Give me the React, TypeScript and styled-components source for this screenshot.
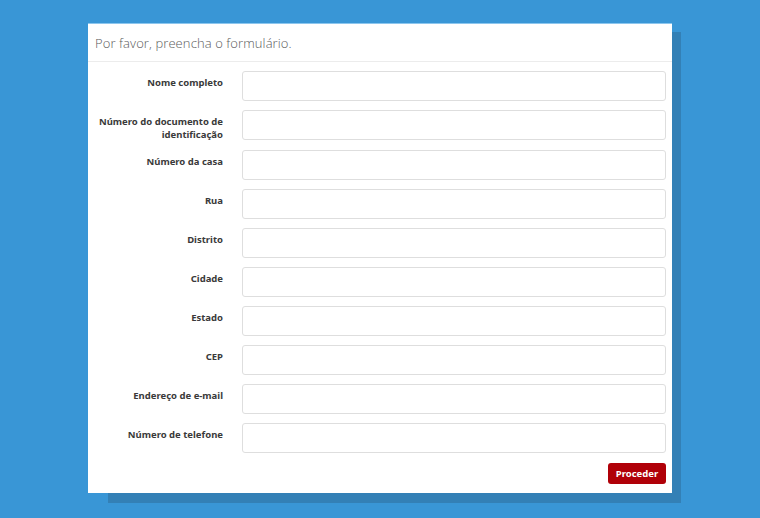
import React, { FC } from 'react'
import styled, { createGlobalStyle } from 'styled-components'

const GlobalStyle = createGlobalStyle`
  html, body {
    margin: 0;
    padding: 0;
    background: #3996d6;
    font-family: 'Noto Sans', 'DejaVu Sans', sans-serif;
  }
`

const fields = [
  'Nome completo',
  'Número do documento de identificação',
  'Número da casa',
  'Rua',
  'Distrito',
  'Cidade',
  'Estado',
  'CEP',
  'Endereço de e-mail',
  'Número de telefone',
]

const App: FC = () => (
  <>
    <GlobalStyle />
    <Page>
      <Frame>
        <Card>
          <Header>Por favor, preencha o formulário.</Header>
          <Body>
            {fields.map(label => (
              <Row key={label}>
                <Label>{label}</Label>
                <Input type="text" />
              </Row>
            ))}
            <Actions>
              <SubmitButton type="button">Proceder</SubmitButton>
            </Actions>
          </Body>
        </Card>
      </Frame>
    </Page>
  </>
)

export default App

const Page = styled.div`
  height: 518px;
  padding: 23px 0 0 88px;
  box-sizing: border-box;
`

const Frame = styled.div`
  position: relative;
  isolation: isolate;
  width: 584px;

  &::before {
    content: '';
    position: absolute;
    top: 9px;
    left: 20px;
    right: -9px;
    bottom: -10px;
    background: #3380b6;
    z-index: -1;
  }
`

const Card = styled.div`
  background: #fff;
  border-top: 1px solid #8cc6ee;
`

const Header = styled.div`
  height: 36px;
  display: flex;
  align-items: center;
  padding: 1px 7px 0;
  border-bottom: 1px solid #ececec;
  font-family: 'Open Sans', sans-serif;
  font-size: 13px;
  font-weight: 300;
  color: #5a5a5a;
  letter-spacing: 0.1px;
`

const Body = styled.div`
  display: flex;
  flex-direction: column;
  gap: 9px;
  padding: 9px 6px 9px 8px;
`

const Row = styled.div`
  display: grid;
  grid-template-columns: 127px 1fr;
  column-gap: 19px;
`

const Label = styled.label`
  padding-top: 5px;
  text-align: right;
  font-size: 9.5px;
  line-height: 13px;
  font-weight: 700;
  color: #3a3a3a;
`

const Input = styled.input`
  height: 30px;
  box-sizing: border-box;
  border: 1px solid #dedede;
  border-radius: 3px;
  background: #fff;
  outline: none;
`

const Actions = styled.div`
  display: flex;
  justify-content: flex-end;
  padding-top: 1px;
`

const SubmitButton = styled.button`
  width: 58px;
  height: 21px;
  border: none;
  border-radius: 3px;
  background: #b00008;
  color: #fff;
  font-family: 'Noto Sans', sans-serif;
  font-size: 9.5px;
  font-weight: 700;
  padding: 0;
  cursor: pointer;
`
